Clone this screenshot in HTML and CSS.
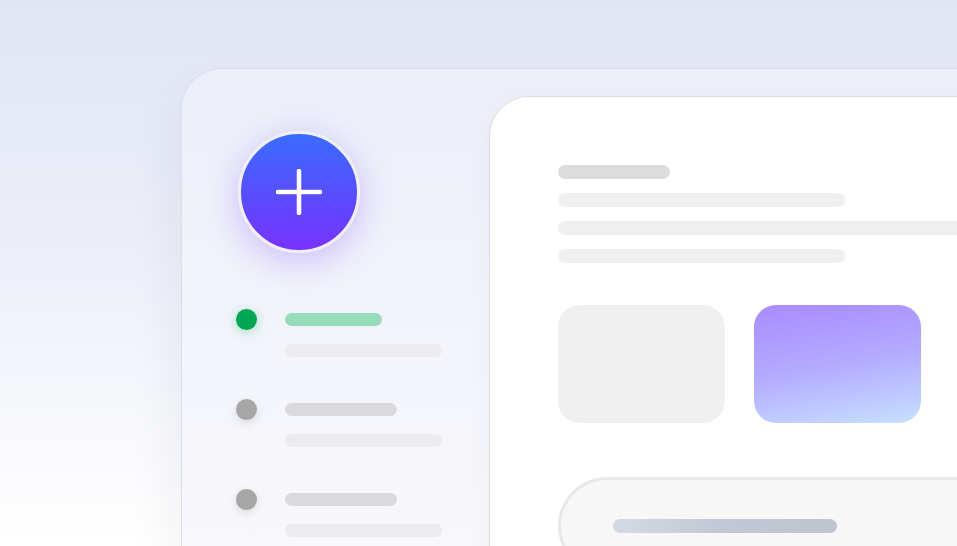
FILE: index.html
```html
<!DOCTYPE html>
<html lang="en">

<head>
    <meta charset="UTF-8">
    <meta name="viewport" content="width=device-width, initial-scale=1.0">
    <title>Dashboard sketch</title>
    <link rel="stylesheet" href="styles.css">
</head>

<body>
    <div class="panel">
        <!-- Left column: add button and task list -->
        <aside class="sidebar">
            <button class="add-btn" aria-label="Add">
                <svg width="46" height="46" viewBox="0 0 46 46">
                    <path d="M23 2v42M2 23h42" stroke="#fff" stroke-width="4.5" stroke-linecap="round" fill="none" />
                </svg>
            </button>

            <ul class="items">
                <li class="item">
                    <span class="dot-wrap"><span class="dot active"></span></span>
                    <div class="lines">
                        <span class="bar bar-title green"></span>
                        <span class="bar bar-sub"></span>
                    </div>
                </li>
                <li class="item">
                    <span class="dot-wrap"><span class="dot"></span></span>
                    <div class="lines">
                        <span class="bar bar-title"></span>
                        <span class="bar bar-sub"></span>
                    </div>
                </li>
                <li class="item">
                    <span class="dot-wrap"><span class="dot"></span></span>
                    <div class="lines">
                        <span class="bar bar-title"></span>
                        <span class="bar bar-sub"></span>
                    </div>
                </li>
            </ul>
        </aside>

        <!-- Main card -->
        <section class="card">
            <div class="text-block">
                <span class="line heading"></span>
                <span class="line short"></span>
                <span class="line long"></span>
                <span class="line short"></span>
            </div>

            <div class="tiles">
                <div class="tile"></div>
                <div class="tile tile-accent"></div>
            </div>

            <div class="pill">
                <span class="pill-bar"></span>
            </div>
        </section>
    </div>
</body>

</html>
```

FILE: styles.css
```css
html,
body {
    height: 100%;
}

body {
    margin: 0;
    overflow: hidden;
    background: linear-gradient(180deg, #e1e6f5 0%, #eceff9 45%, #f7f8fc 75%, #ffffff 100%);
    font-family: "Inter", sans-serif;
}

.panel {
    display: flex;
    align-items: flex-start;
    margin: 68px 0 0 181px;
    padding: 27px 0 0 54px;
    width: 900px;
    height: 600px;
    border: 1px solid #dcdcef;
    border-right: none;
    border-radius: 40px 0 0 0;
    background: linear-gradient(180deg, #eceff9 0%, #f5f6fb 55%, #fafafc 100%);
    box-shadow: -12px 24px 40px rgba(90, 95, 120, 0.07);
}

.sidebar {
    width: 253px;
    flex-shrink: 0;
    padding-top: 35px;
}

.add-btn {
    display: flex;
    align-items: center;
    justify-content: center;
    width: 122px;
    height: 122px;
    margin-left: 2px;
    padding: 0;
    border: 3px solid #efeff4;
    border-radius: 50%;
    background: linear-gradient(180deg, #3a6cff 0%, #5a4cff 55%, #7a32ff 100%);
    box-shadow: 0 8px 36px rgba(120, 70, 255, 0.32);
    cursor: pointer;
}

.items {
    list-style: none;
    margin: 60px 0 0;
    padding: 0;
    display: flex;
    flex-direction: column;
    gap: 46px;
}

.item {
    display: flex;
    align-items: flex-start;
}

.dot-wrap {
    display: flex;
    align-items: center;
    height: 13px;
    width: 49px;
    flex-shrink: 0;
}

.dot {
    width: 21px;
    height: 21px;
    border-radius: 50%;
    background: #a6a6a6;
    box-shadow: 0 3px 10px rgba(0, 0, 0, 0.12);
}

.dot.active {
    background: #00a651;
    box-shadow: 0 2px 12px rgba(0, 166, 81, 0.35);
}

.lines {
    display: flex;
    flex-direction: column;
    gap: 18px;
}

.bar {
    display: block;
    height: 13px;
    border-radius: 7px;
}

.bar-title {
    width: 112px;
    background: #dadadc;
}

.bar-title.green {
    width: 97px;
    background: #98dbbb;
}

.bar-sub {
    width: 157px;
    background: #ececee;
}

.card {
    flex-shrink: 0;
    width: 600px;
    height: 600px;
    box-sizing: border-box;
    padding: 68px 0 0 68px;
    background: #fff;
    border: 1px solid #dcdcde;
    border-radius: 40px 0 0 0;
    box-shadow: 0 6px 24px rgba(80, 90, 130, 0.05);
}

.text-block {
    display: flex;
    flex-direction: column;
    gap: 14px;
}

.line {
    display: block;
    height: 14px;
    border-radius: 7px;
    background: #f0f0f0;
}

.line.heading {
    width: 112px;
    background: #dcdcdc;
}

.line.short {
    width: 287px;
}

.line.long {
    width: 520px;
}

.tiles {
    display: flex;
    gap: 29px;
    margin-top: 42px;
}

.tile {
    width: 167px;
    height: 118px;
    border-radius: 22px;
    background: #f0f0f0;
}

.tile-accent {
    background: linear-gradient(170deg, #a88bff 0%, #b4aaff 50%, #c6e0ff 100%);
}

.pill {
    display: flex;
    align-items: center;
    margin-top: 54px;
    height: 98px;
    width: 520px;
    box-sizing: border-box;
    padding-left: 52px;
    border: 3px solid #e8e8e9;
    border-right: none;
    border-radius: 50px 0 0 50px;
    background: #f7f7f8;
}

.pill-bar {
    display: block;
    width: 224px;
    height: 14px;
    border-radius: 7px;
    background: linear-gradient(90deg, #d4d9e3 0%, #c2c8d3 50%, #bec5cf 100%);
}
```
